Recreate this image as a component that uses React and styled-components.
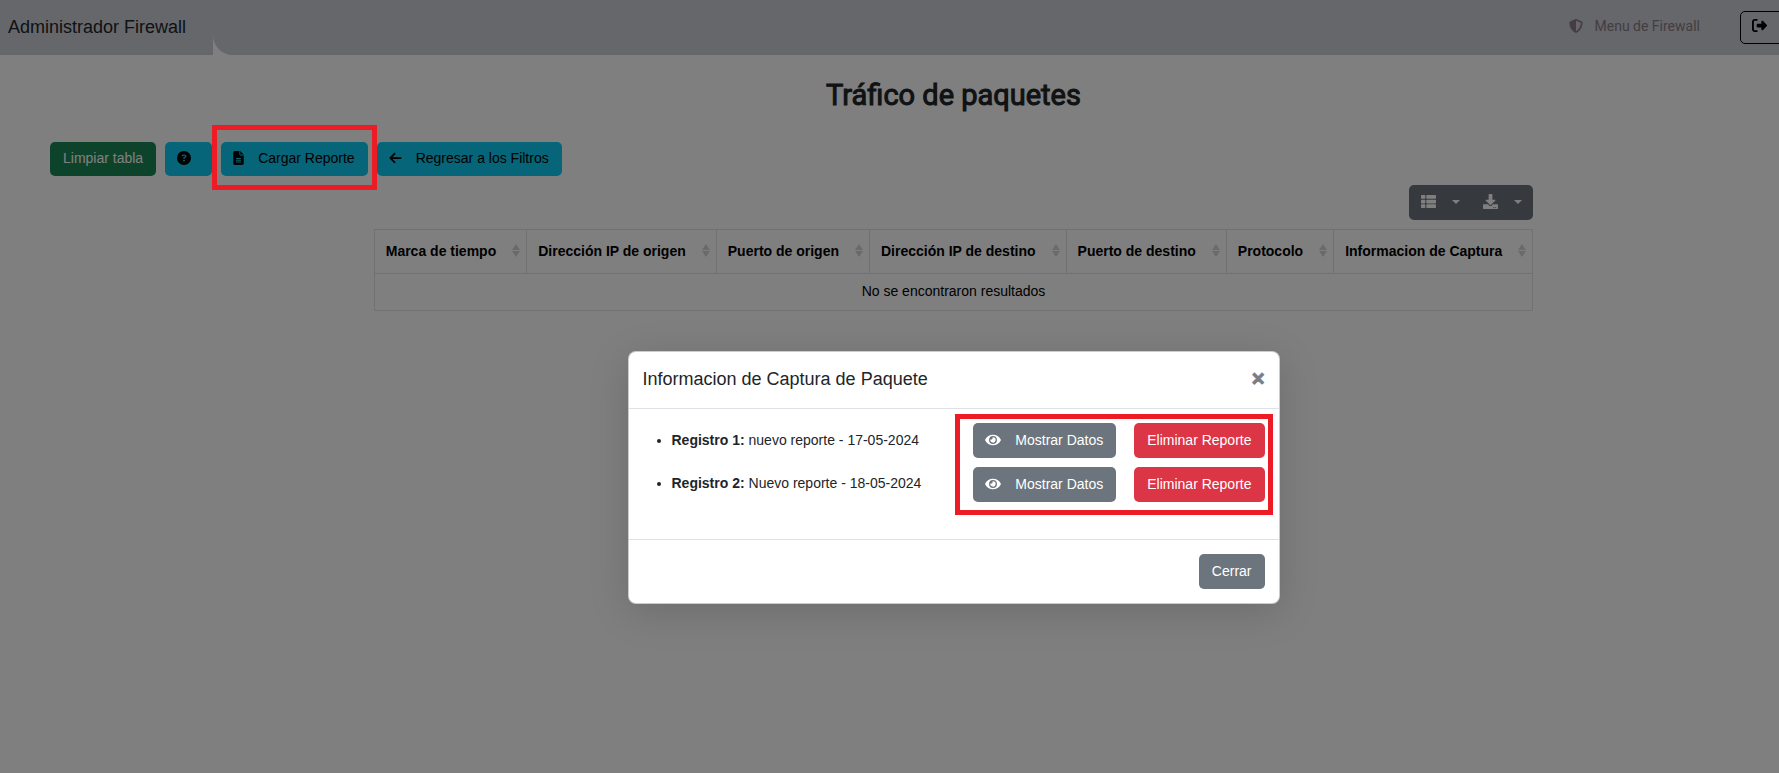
import React from "react";
import styled, { createGlobalStyle, css } from "styled-components";
import { FaThList, FaDownload, FaEye } from "react-icons/fa";
import {
  FaArrowLeft,
  FaCircleQuestion,
  FaFileLines,
  FaRightFromBracket,
  FaShieldHalved,
} from "react-icons/fa6";

const GlobalStyle = createGlobalStyle`
  *, *::before, *::after { box-sizing: border-box; }
  html, body { margin: 0; background: #fff; }
  body {
    font-family: "Liberation Sans", Arial, sans-serif;
    font-size: 14px;
    line-height: 22px;
    color: #212529;
  }
  button { font: inherit; cursor: pointer; }
`;

const Viewport = styled.div`
  position: relative;
  min-height: 100vh;
  overflow: hidden;
`;

/* The desktop is wider than the visible window and runs off its right side. */
const Desktop = styled.div`
  width: calc(100% + 128px);
`;

const TopBar = styled.header`
  display: flex;
  height: 55px;
`;

const Brand = styled.a`
  flex: 0 0 213px;
  padding: 15px 8px;
  background: #cbced6;
  color: #212529;
  font-size: 18px;
  line-height: 24px;
  text-decoration: none;
`;

const Nav = styled.nav`
  flex: 1;
  display: flex;
  align-items: flex-start;
  justify-content: flex-end;
  gap: 40px;
  padding: 11px 36px;
  background: #cbced6;
  border-bottom-left-radius: 20px;
`;

const NavLink = styled.a`
  display: flex;
  align-items: center;
  gap: 12px;
  padding-top: 4px;
  color: #8b7a82;
  font-family: Roboto, sans-serif;
  text-decoration: none;
`;

const LogoutButton = styled.button`
  display: flex;
  align-items: center;
  width: 131px;
  height: 33px;
  padding: 0 11px 4px;
  border: 1px solid #000;
  border-radius: 5px;
  background: transparent;
  color: #000;
`;

const Title = styled.h1`
  margin: 20px 0 0;
  text-align: center;
  font-family: Roboto, sans-serif;
  font-size: 29px;
  font-weight: 400;
  line-height: 40px;
  -webkit-text-stroke: 1px currentColor;
`;

const tones = {
  success: css`background: #198754; color: #fff;`,
  info: css`background: #0dcaf0; color: #000;`,
  secondary: css`background: #6c757d; color: #fff;`,
  danger: css`background: #dc3545; color: #fff;`,
};

const Button = styled.button`
  display: inline-flex;
  align-items: center;
  gap: 14px;
  height: ${(p) => (p.$tall ? 35 : 34)}px;
  padding: 0 13px 2px;
  border: 0;
  border-radius: 5px;
  white-space: nowrap;
  ${(p) => tones[p.$tone]}
`;

const LabelledIconButton = styled(Button)`
  padding-left: 12px;

  & > svg {
    flex: none;
    width: ${(p) => p.$icon}px;
    height: 14px;
  }
`;

const IconButton = styled(Button)`
  padding: 0 21px 2px 12px;
`;

const Toolbar = styled.div`
  display: flex;
  gap: 9px;
  margin-top: 27px;
  padding-left: 50px;
`;

const Marked = styled.div`
  position: relative;
  display: flex;
`;

const RedFrame = styled.span`
  position: absolute;
  z-index: 30;
  inset: ${(p) => p.$inset};
  border: 5px solid #ed1c24;
  pointer-events: none;
`;

const Report = styled.section`
  width: fit-content;
  margin: 9px auto 0;
`;

const TableTools = styled.div`
  display: flex;
  justify-content: flex-end;
  margin-bottom: 9px;
`;

const ToolGroup = styled.div`
  display: flex;
  border-radius: 5px;
  overflow: hidden;
`;

const MenuButton = styled.button`
  display: flex;
  align-items: center;
  justify-content: space-between;
  width: 62px;
  height: 35px;
  padding: 0 11px 2px 12px;
  border: 0;
  background: #6c757d;
  color: #fff;
  font-size: 15px;
`;

const Caret = styled.span`
  border: 4px solid transparent;
  border-top-color: currentColor;
  border-bottom: 0;
`;

const Table = styled.table`
  border-collapse: collapse;
  color: #000;

  th, td { border: 1px solid #dee2e6; }
`;

const HeadCell = styled.th`
  height: 44px;
  padding: 0 6px 2px 11px;
  text-align: left;
  white-space: nowrap;
`;

const HeadInner = styled.div`
  display: flex;
  align-items: center;
  justify-content: space-between;
  gap: 16px;
`;

const SortIcon = styled.svg`
  width: 8px;
  height: 13px;
  fill: #d4d4d4;
`;

const EmptyCell = styled.td`
  height: 37px;
  padding: 0 0 2px;
  text-align: center;
`;

const Backdrop = styled.div`
  position: absolute;
  inset: 0 -128px 0 0;
  z-index: 20;
  display: flex;
  align-items: flex-start;
  justify-content: center;
  padding-top: 351px;
  background: rgba(0, 0, 0, 0.5);
`;

const Dialog = styled.section`
  width: 100%;
  max-width: 652px;
  border: 1px solid rgba(0, 0, 0, 0.2);
  border-radius: 8px;
  background: #fff;
  box-shadow: 0 8px 40px rgba(0, 0, 0, 0.15);
`;

const DialogHeader = styled.header`
  display: flex;
  align-items: center;
  justify-content: space-between;
  height: 57px;
  padding: 0 14px 2px;
  border-bottom: 1px solid #dee2e6;
`;

const DialogTitle = styled.h2`
  margin: 0;
  font-size: 18px;
  font-weight: 400;
  line-height: 26px;
`;

const CloseButton = styled.button`
  padding: 0;
  border: 0;
  background: transparent;
  color: #000;
  opacity: 0.5;
  font-size: 22px;
  font-weight: 700;
  line-height: 22px;
  -webkit-text-stroke: 1px currentColor;
`;

const DialogBody = styled.div`
  display: flex;
  justify-content: space-between;
  padding: 14px 14px 37px;
`;

const RecordList = styled.ul`
  display: grid;
  gap: 8px;
  align-content: start;
  margin: 0;
  padding: 0 0 0 29px;
`;

const Record = styled.li`
  line-height: 35px;
`;

const RecordActions = styled.div`
  position: relative;
  display: grid;
  grid-template-columns: auto auto;
  align-content: start;
  gap: 9px 18px;
`;

const DialogFooter = styled.footer`
  display: flex;
  justify-content: flex-end;
  padding: 14px;
  border-top: 1px solid #dee2e6;
`;

const columns = [
  "Marca de tiempo",
  "Dirección IP de origen",
  "Puerto de origen",
  "Dirección IP de destino",
  "Puerto de destino",
  "Protocolo",
  "Informacion de Captura",
];

const records = [
  { id: 1, text: "nuevo reporte - 17-05-2024" },
  { id: 2, text: "Nuevo reporte - 18-05-2024" },
];

export default function App() {
  return (
    <Viewport>
      <GlobalStyle />
      <Desktop>
        <TopBar>
          <Brand href="#inicio">Administrador Firewall</Brand>
          <Nav>
            <NavLink href="#menu">
              <FaShieldHalved size={14} /> Menu de Firewall
            </NavLink>
            <LogoutButton type="button" aria-label="Salir">
              <FaRightFromBracket size={15} />
            </LogoutButton>
          </Nav>
        </TopBar>
        <main>
          <Title>Tráfico de paquetes</Title>
          <Toolbar>
            <Button type="button" $tone="success">Limpiar tabla</Button>
            <IconButton type="button" $tone="info" aria-label="Ayuda">
              <FaCircleQuestion size={14} />
            </IconButton>
            <Marked>
              <LabelledIconButton type="button" $tone="info" $icon={11}>
                <FaFileLines /> Cargar Reporte
              </LabelledIconButton>
              <RedFrame $inset="-17px -9px -14px" />
            </Marked>
            <LabelledIconButton type="button" $tone="info" $icon={13}>
              <FaArrowLeft /> Regresar a los Filtros
            </LabelledIconButton>
          </Toolbar>
          <Report>
            <TableTools>
              <ToolGroup>
                <MenuButton type="button" aria-label="Columnas">
                  <FaThList /> <Caret />
                </MenuButton>
                <MenuButton type="button" aria-label="Exportar">
                  <FaDownload /> <Caret />
                </MenuButton>
              </ToolGroup>
            </TableTools>
            <Table>
              <thead>
                <tr>
                  {columns.map((name) => (
                    <HeadCell key={name} scope="col">
                      <HeadInner>
                        {name}
                        <SortIcon viewBox="0 0 8 13" aria-hidden="true">
                          <path d="M4 0 8 6H0zM0 7h8L4 13z" />
                        </SortIcon>
                      </HeadInner>
                    </HeadCell>
                  ))}
                </tr>
              </thead>
              <tbody>
                <tr>
                  <EmptyCell colSpan={columns.length}>No se encontraron resultados</EmptyCell>
                </tr>
              </tbody>
            </Table>
          </Report>
        </main>
      </Desktop>
      <Backdrop>
        <Dialog role="dialog" aria-modal="true" aria-labelledby="captura">
          <DialogHeader>
            <DialogTitle id="captura">Informacion de Captura de Paquete</DialogTitle>
            <CloseButton type="button" aria-label="Cerrar ventana">×</CloseButton>
          </DialogHeader>
          <DialogBody>
            <RecordList>
              {records.map((r) => (
                <Record key={r.id}>
                  <strong>Registro {r.id}:</strong> {r.text}
                </Record>
              ))}
            </RecordList>
            <RecordActions>
              {records.map((r) => (
                <React.Fragment key={r.id}>
                  <LabelledIconButton type="button" $tone="secondary" $tall $icon={16}>
                    <FaEye /> Mostrar Datos
                  </LabelledIconButton>
                  <Button type="button" $tone="danger" $tall>Eliminar Reporte</Button>
                </React.Fragment>
              ))}
              <RedFrame $inset="-9px -8px -13px -18px" />
            </RecordActions>
          </DialogBody>
          <DialogFooter>
            <Button type="button" $tone="secondary" $tall>Cerrar</Button>
          </DialogFooter>
        </Dialog>
      </Backdrop>
    </Viewport>
  );
}
